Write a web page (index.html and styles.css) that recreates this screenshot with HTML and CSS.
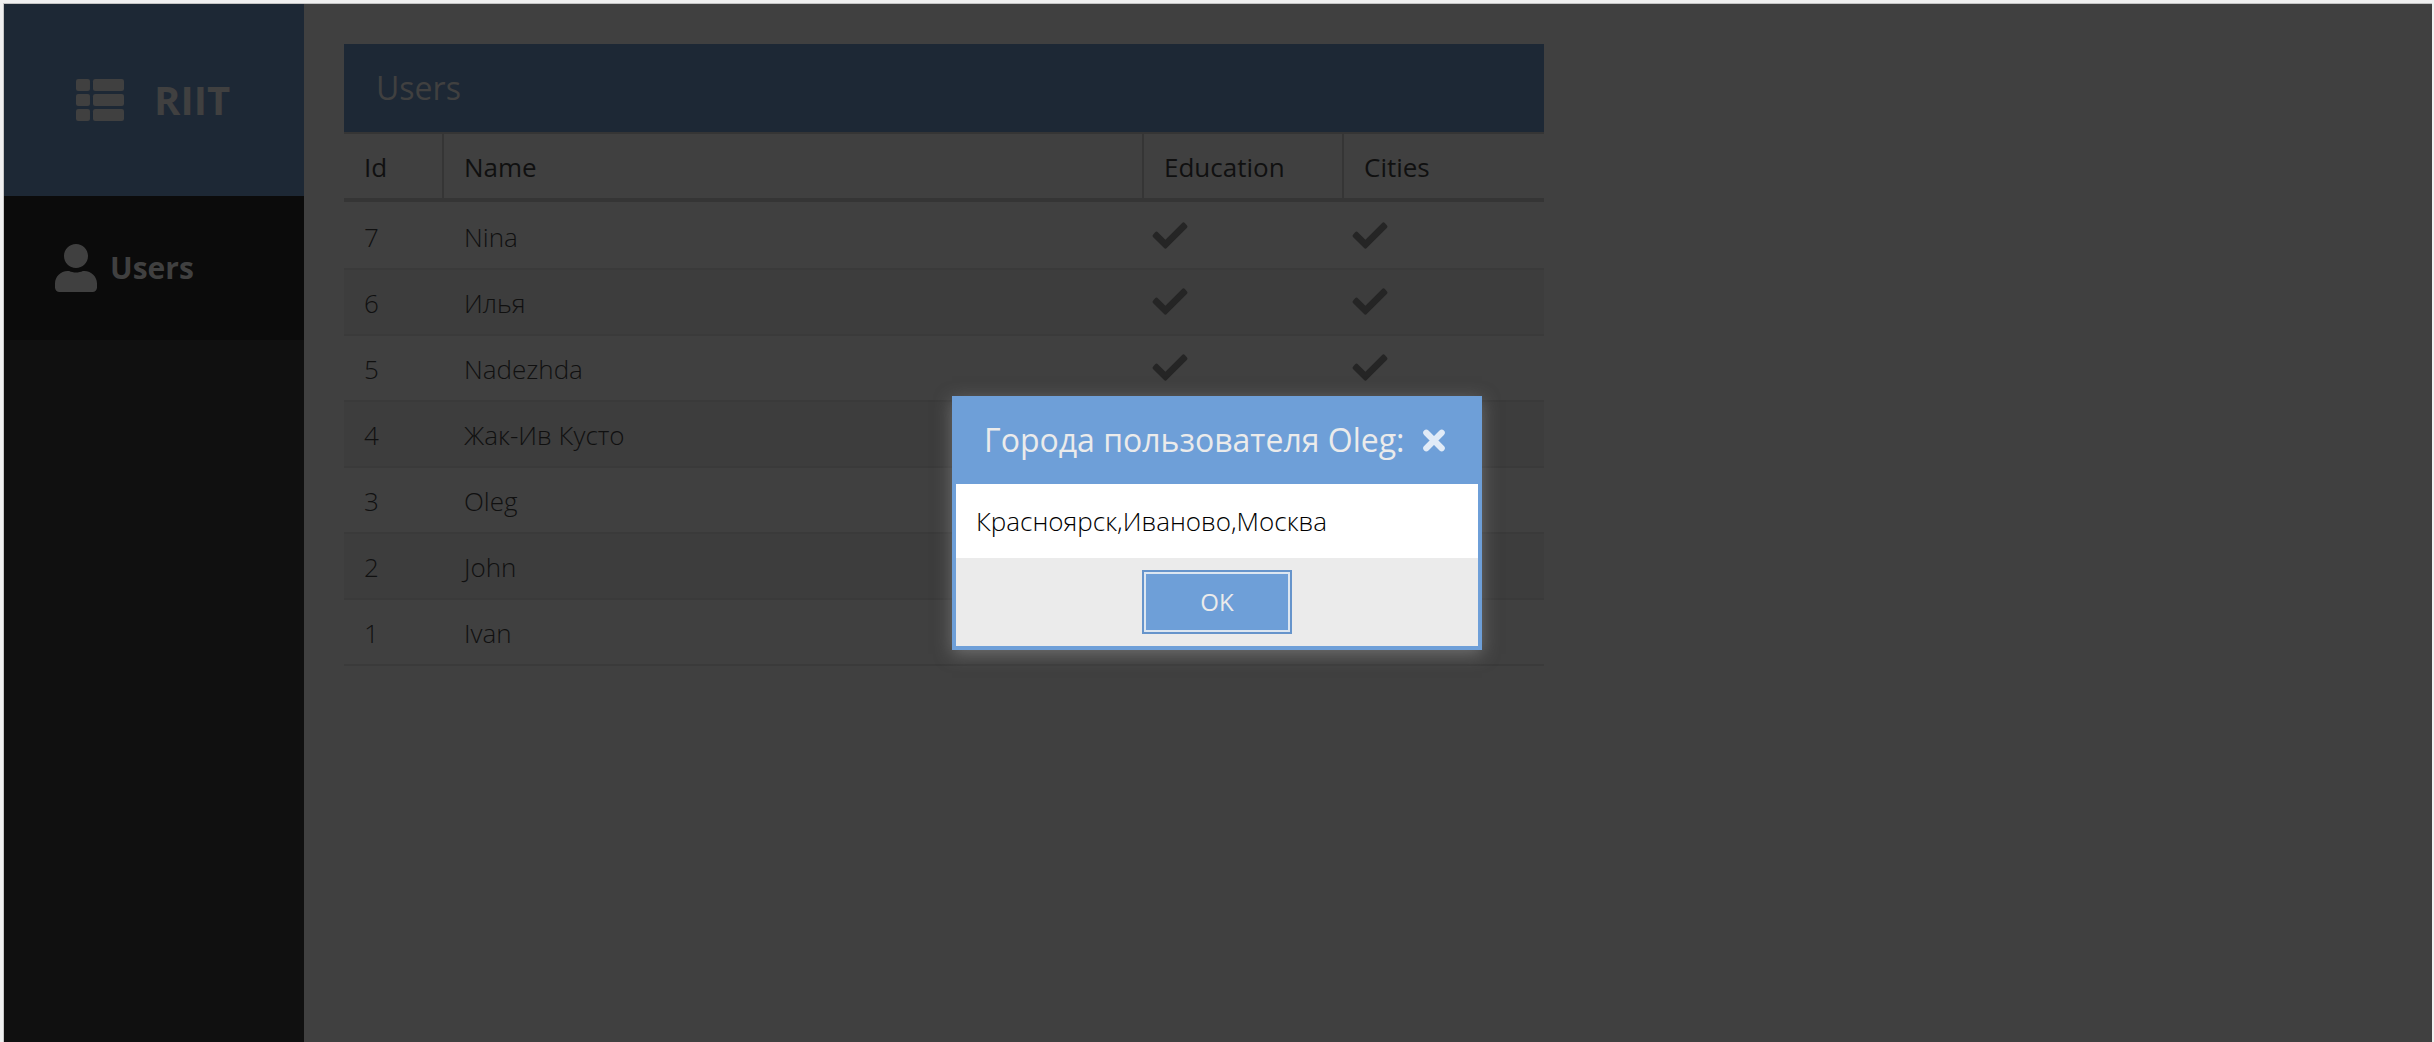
FILE: index.html
```html
<!DOCTYPE html>
<html lang="ru">
<head>
<meta charset="utf-8">
<title>RIIT</title>
<link rel="stylesheet" href="styles.css">
</head>
<body>
<svg class="sprite" aria-hidden="true">
  <symbol id="check" viewBox="0 0 108 82"><path d="M3 38l6-7q4-4 8 0L40 54 91 3q4-4 8 0l6 7q4 4 0 8L44 79q-4 4-8 0L3 46q-4-4 0-8z"/></symbol>
</svg>
<div class="app">
  <aside class="sidebar">
    <div class="logo">
      <svg class="logo-icon" viewBox="0 0 512 512"><rect y="32" width="149.3" height="128" rx="24"/><rect y="192" width="149.3" height="128" rx="24"/><rect y="352" width="149.3" height="128" rx="24"/><rect x="181.3" y="32" width="330.7" height="128" rx="24"/><rect x="181.3" y="192" width="330.7" height="128" rx="24"/><rect x="181.3" y="352" width="330.7" height="128" rx="24"/></svg>
      <span>RIIT</span>
    </div>
    <nav class="menu-item">
      <svg class="user-icon" viewBox="0 0 448 512"><path d="M224 256c70.7 0 128-57.3 128-128S294.7 0 224 0 96 57.3 96 128s57.3 128 128 128zm89.6 32h-16.7c-22.2 10.2-46.9 16-72.9 16s-50.6-5.8-72.9-16h-16.7C60.2 288 0 348.2 0 422.4V464c0 26.5 21.5 48 48 48h352c26.5 0 48-21.5 48-48v-41.6c0-74.2-60.2-134.4-134.4-134.4z"/></svg>
      <span>Users</span>
    </nav>
  </aside>
  <main class="content">
    <h1 class="title">Users</h1>
    <div class="row head"><div>Id</div><div>Name</div><div>Education</div><div>Cities</div></div>
    <div class="rows">
      <div class="row"><div>7</div><div>Nina</div><div class="mark"><svg><use href="#check"/></svg></div><div class="mark"><svg><use href="#check"/></svg></div></div>
      <div class="row"><div>6</div><div>Илья</div><div class="mark"><svg><use href="#check"/></svg></div><div class="mark"><svg><use href="#check"/></svg></div></div>
      <div class="row"><div>5</div><div>Nadezhda</div><div class="mark"><svg><use href="#check"/></svg></div><div class="mark"><svg><use href="#check"/></svg></div></div>
      <div class="row"><div>4</div><div>Жак-Ив Кусто</div></div>
      <div class="row"><div>3</div><div>Oleg</div></div>
      <div class="row"><div>2</div><div>John</div></div>
      <div class="row"><div>1</div><div>Ivan</div></div>
    </div>
  </main>
</div>
<div class="dialog" role="dialog">
  <header class="dialog-head">
    <span>Города пользователя Oleg:</span>
    <svg class="close" viewBox="0 0 22 23"><path d="M3.3 3.8l15.4 15.4M18.7 3.8L3.3 19.2"/></svg>
  </header>
  <div class="dialog-body">Красноярск,Иваново,Москва</div>
  <footer class="dialog-foot"><button class="ok">OK</button></footer>
</div>
</body>
</html>
```
FILE: styles.css
```css
* { box-sizing: border-box; }
body {
  margin: 0;
  height: 1042px;
  overflow: hidden;
  background: #f0f0f0;
  padding: 3px 2px 0 3px;
  font: 300 26px/64px "Open Sans", sans-serif;
  color: #101010;
}
.sprite { position: absolute; width: 0; height: 0; }
.app {
  display: flex;
  height: 1039px;
  background: #404040;
  border-top: 1px solid #c4c4c4;
  border-left: 1px solid #c8c8c8;
}
.sidebar { width: 300px; background: #101010; color: #404040; fill: #404040; }
.logo {
  display: flex;
  align-items: center;
  height: 192px;
  padding-left: 72px;
  gap: 30px;
  background: #1d2835;
  font-size: 40px;
  font-weight: 700;
}
.logo-icon { width: 48px; height: 48px; }
.menu-item {
  display: flex;
  align-items: center;
  height: 144px;
  padding-left: 51px;
  gap: 13px;
  background: #0b0b0b;
  font-size: 30px;
  font-weight: 700;
}
.user-icon { width: 42px; height: 48px; }
.content { width: 1240px; padding: 40px 0 0 40px; }
.title {
  margin: 0;
  height: 88px;
  padding-left: 32px;
  background: #1d2835;
  color: #404040;
  font-size: 32px;
  font-weight: 400;
  line-height: 88px;
}
.row {
  display: grid;
  grid-template-columns: 100px 700px 200px 200px;
  height: 66px;
  width: 1200px;
  border-bottom: 2px solid #3a3a3a;
}
.row > div { padding: 1px 0 0 20px; height: 64px; }
.row:nth-child(even) { background: #3d3d3d; }
.row.head {
  height: 70px;
  background: none;
  border-top: 2px solid #353535;
  border-bottom: 4px solid #353535;
  font-weight: 400;
}
.head > div { border-right: 2px solid #353535; }
.head > div:last-child { border-right: 0; }
.rows { padding-top: 2px; }
.row > .mark { padding: 18px 0 0 8px; line-height: 0; }
.mark svg { width: 36px; height: 27px; fill: #252525; }
.dialog {
  position: absolute;
  left: 952px;
  top: 396px;
  width: 530px;
  height: 254px;
  border: 4px solid #6e9fd8;
  background: #6e9fd8;
  box-shadow: 0 4px 16px rgba(150, 150, 150, .55);
}
.dialog-head {
  display: flex;
  align-items: center;
  height: 84px;
  padding: 0 33px 4px 28px;
  justify-content: space-between;
  white-space: nowrap;
  color: #ebebeb;
  font-size: 32px;
  font-weight: 400;
}
.close {
  flex: none;
  width: 22px;
  height: 23px;
  fill: none;
  stroke: #e1ebf7;
  stroke-width: 6.2;
  stroke-linecap: round;
}
.dialog-body { height: 74px; padding: 5px 20px; background: #fff; color: #000; }
.dialog-foot { height: 88px; padding-top: 12px; background: #ebebeb; text-align: center; line-height: 0; }
.ok {
  width: 150px;
  height: 64px;
  padding: 0;
  border: 2px solid #6694cb;
  box-shadow: inset 0 0 0 2px #dce6f1;
  background: #6e9fd8;
  color: #ebebeb;
  font: 400 24px/60px "Open Sans", sans-serif;
}
```
